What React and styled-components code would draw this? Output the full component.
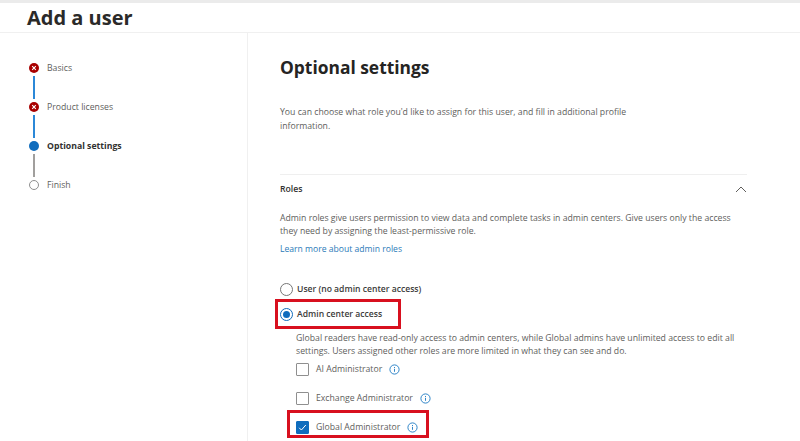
import React from "react";
import styled, { createGlobalStyle } from "styled-components";

const Global = createGlobalStyle`
  html, body { margin: 0; padding: 0; background: #fff; }
  body { font-family: "Open Sans", "Noto Sans", "Liberation Sans", sans-serif; color: #323130; }
`;
const Page = styled.div`
  width: 800px; height: 441px; overflow: hidden; display: flex; flex-direction: column;
  border-top: 3px solid #ebebeb; box-sizing: border-box;
`;
const Header = styled.header`
  height: 29px; flex: none; display: flex; align-items: center; padding-left: 27px;
  border-bottom: 1px solid #f0f0f0; box-sizing: content-box;
`;
const Title = styled.h1`
  margin: 0; font-size: 20px; font-weight: 700; color: #2b2a29; line-height: 29px;
`;
const Body = styled.div`display: flex; flex: 1; min-height: 0;`;
const Side = styled.nav`
  width: 248px; flex: none; box-sizing: border-box; border-right: 1px solid #f0f0f0;
  padding: 29px 0 0 29px;
`;
const StepRow = styled.div`
  display: flex; align-items: center; gap: 8px; height: 11px;
`;
const Dot = styled.span`
  width: 10px; height: 10px; flex: none; border-radius: 50%; box-sizing: border-box;
  display: flex; align-items: center; justify-content: center;
  background: ${p => p.$kind === "error" ? "#a80000" : p.$kind === "current" ? "#0f6cbd" : "#fff"};
  border: ${p => p.$kind === "todo" ? "1px solid #8f8f8f" : "none"};
`;
const StepLabel = styled.span`
  padding-top: 2px;
  font-size: 8.7px; line-height: 11px; font-weight: ${p => p.$active ? 700 : 400};
  color: ${p => p.$active ? "#323130" : "#605e5c"}; white-space: nowrap;
`;
const Connector = styled.div`
  width: 1.5px; height: 23px; margin: 2.5px 0 2.5px 4.25px;
  background: ${p => p.$done ? "#2b88d8" : "#a19f9d"};
`;
const Main = styled.main`
  flex: 1; padding: 21px 53px 0 32px; box-sizing: border-box; min-width: 0;
`;
const Heading = styled.h2`
  margin: 0; font-size: 17.4px; line-height: 26px; font-weight: 700; color: #252423;
`;
const Intro = styled.p`
  margin: 25px 0 0; width: 370px; font-size: 8.7px; line-height: 14px; color: #605e5c;
`;
const Section = styled.section`
  margin-top: 41px; border-top: 1px solid #efefef;
`;
const SectionHead = styled.div`
  display: flex; align-items: center; justify-content: space-between; height: 28px;
`;
const SectionTitle = styled.span`font-size: 8.7px; font-weight: 600; color: #323130;`;
const Para = styled.p`
  margin: 9px 0 0; width: 452px; font-size: 8.7px; line-height: 13px; color: #605e5c;
`;
const Link = styled.a`
  display: block; margin-top: 5px; font-size: 8.6px; line-height: 13px; color: #2a7ab8;
`;
const RadioRow = styled.div`
  position: relative; display: flex; align-items: center; gap: 4px; height: 14px;
  margin-top: ${p => p.$mt}px;
`;
const Radio = styled.span`
  width: 13px; height: 13px; border-radius: 50%; box-sizing: border-box; flex: none;
  display: flex; align-items: center; justify-content: center; background: #fff;
  border: 1px solid ${p => p.$on ? "#0f6cbd" : "#767676"};
  &::after {
    content: ""; width: 7px; height: 7px; border-radius: 50%;
    background: ${p => p.$on ? "#0f6cbd" : "transparent"};
  }
`;
const RadioLabel = styled.span`font-size: 8.6px; font-weight: 600; color: #3b3a39; white-space: nowrap;`;
const Nested = styled.div`padding-left: 16px;`;
const NestedText = styled.p`
  margin: 11px 0 0; width: 440px; font-size: 8.7px; line-height: 13px; color: #605e5c;
`;
const CheckRow = styled.div`
  position: relative; display: flex; align-items: center; height: 14px; margin-top: ${p => p.$mt}px;
`;
const Box = styled.span`
  width: 13px; height: 13px; box-sizing: border-box; flex: none; border-radius: 1px;
  display: flex; align-items: center; justify-content: center;
  border: 1px solid ${p => p.$on ? "#0f6cbd" : "#8f8f8f"};
  background: ${p => p.$on ? "#0f6cbd" : "#fff"};
`;
const CheckLabel = styled.span`
  margin-left: 7px; font-size: 8.7px; color: #605e5c; white-space: nowrap;
`;
const InfoIcon = styled.svg`width: 11px; height: 11px; margin-left: 7px; flex: none; color: #1a78c2;`;
const Highlight = styled.span`
  position: absolute; pointer-events: none; border: 3px solid #d8101f; box-sizing: border-box;
  left: ${p => p.$l}px; top: ${p => p.$t}px; width: ${p => p.$w}px; height: ${p => p.$h}px;
`;

const Cross = () => (
  <svg width="6" height="6" viewBox="0 0 6 6"><path d="M1.2 1.2l3.6 3.6M4.8 1.2L1.2 4.8" stroke="#fff" strokeWidth="1.1" /></svg>
);
const Info = () => (
  <InfoIcon viewBox="0 0 11 11" fill="none">
    <circle cx="5.5" cy="5.5" r="4.6" stroke="currentColor" strokeWidth="0.9" />
    <path d="M5.5 4.8v3M5.5 3v1" stroke="currentColor" strokeWidth="0.9" />
  </InfoIcon>
);
const steps = [
  ["Basics", "error", true],
  ["Product licenses", "error", true],
  ["Optional settings", "current", false],
  ["Finish", "todo", null],
];

export default function App() {
  return (
    <Page>
      <Global />
      <Header><Title>Add a user</Title></Header>
      <Body>
        <Side>
          {steps.map(([label, kind, done]) => (
            <React.Fragment key={label}>
              <StepRow>
                <Dot $kind={kind}>{kind === "error" && <Cross />}</Dot>
                <StepLabel $active={kind === "current"}>{label}</StepLabel>
              </StepRow>
              {done !== null && <Connector $done={done} />}
            </React.Fragment>
          ))}
        </Side>
        <Main>
          <Heading>Optional settings</Heading>
          <Intro>You can choose what role you'd like to assign for this user, and fill in additional profile information.</Intro>
          <Section>
            <SectionHead>
              <SectionTitle>Roles</SectionTitle>
              <svg width="12" height="7" viewBox="0 0 12 7" fill="none"><path d="M1 6l5-5 5 5" stroke="#605e5c" strokeWidth="1" /></svg>
            </SectionHead>
            <Para>Admin roles give users permission to view data and complete tasks in admin centers. Give users only the access they need by assigning the least-permissive role.</Para>
            <Link>Learn more about admin roles</Link>
            <RadioRow $mt={26}><Radio /><RadioLabel>User (no admin center access)</RadioLabel></RadioRow>
            <RadioRow $mt={11}>
              <Radio $on /><RadioLabel>Admin center access</RadioLabel>
              <Highlight $l={-5} $t={-8} $w={126} $h={30} />
            </RadioRow>
            <Nested>
              <NestedText>Global readers have read-only access to admin centers, while Global admins have unlimited access to edit all settings. Users assigned other roles are more limited in what they can see and do.</NestedText>
              <CheckRow $mt={4}><Box /><CheckLabel>AI Administrator</CheckLabel><Info /></CheckRow>
              <CheckRow $mt={15}><Box /><CheckLabel>Exchange Administrator</CheckLabel><Info /></CheckRow>
              <CheckRow $mt={15}>
                <Box $on>
                  <svg width="9" height="9" viewBox="0 0 9 9" fill="none"><path d="M1.2 4.8l2.2 2.2 4.4-5" stroke="#fff" strokeWidth="1" /></svg>
                </Box>
                <CheckLabel>Global Administrator</CheckLabel><Info />
                <Highlight $l={-9} $t={-10} $w={142} $h={28} />
              </CheckRow>
            </Nested>
          </Section>
        </Main>
      </Body>
    </Page>
  );
}
